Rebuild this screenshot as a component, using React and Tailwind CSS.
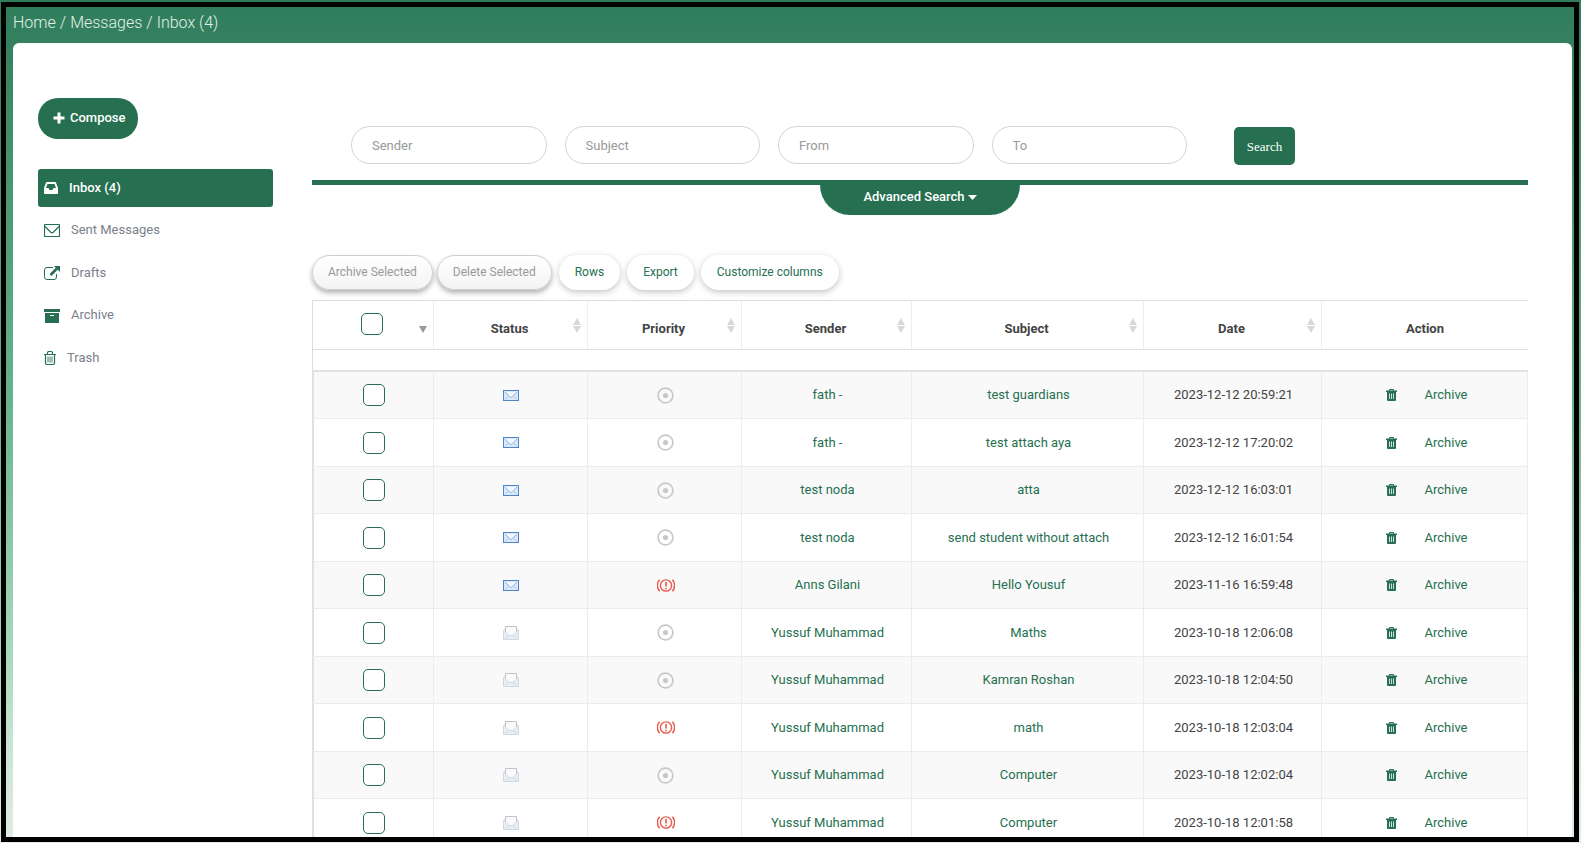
import React from "react";

const rows = [
  ["new", false, "fath -", "test guardians", "2023-12-12 20:59:21"],
  ["new", false, "fath -", "test attach aya", "2023-12-12 17:20:02"],
  ["new", false, "test noda", "atta", "2023-12-12 16:03:01"],
  ["new", false, "test noda", "send student without attach", "2023-12-12 16:01:54"],
  ["new", true, "Anns Gilani", "Hello Yousuf", "2023-11-16 16:59:48"],
  ["read", false, "Yussuf Muhammad", "Maths", "2023-10-18 12:06:08"],
  ["read", false, "Yussuf Muhammad", "Kamran Roshan", "2023-10-18 12:04:50"],
  ["read", true, "Yussuf Muhammad", "math", "2023-10-18 12:03:04"],
  ["read", false, "Yussuf Muhammad", "Computer", "2023-10-18 12:02:04"],
  ["read", true, "Yussuf Muhammad", "Computer", "2023-10-18 12:01:58"],
];

const PlusIcon = () => (
  <svg width="12" height="12" viewBox="0 0 12 12" fill="currentColor" aria-hidden="true">
    <path d="M4.5 0.5h3v4h4v3h-4v4h-3v-4h-4v-3h4z" />
  </svg>
);

const InboxIcon = () => (
  <svg width="14" height="12" viewBox="0 0 14 12" fill="currentColor" aria-hidden="true">
    <path
      fillRule="evenodd"
      d="M3 0h8a1 1 0 0 1 .9.6L14 6v5a1 1 0 0 1-1 1H1a1 1 0 0 1-1-1V6L2.100.6A1 1 0 0 1 3 0zM3.500 2L2 6h2.500l1 2h3l1-2H12l-1.500-4z"
    />
  </svg>
);

const MailIcon = () => (
  <svg width="16" height="13" viewBox="0 0 16 13" fill="none" stroke="currentColor" aria-hidden="true">
    <rect x="0.5" y="0.5" width="15" height="12" rx="0.5" strokeWidth="1.200" />
    <path d="M1 2.500l5.500 5.500a2.200 2.200 0 0 0 3 0L15 2.500" strokeWidth="1.200" />
  </svg>
);

const DraftIcon = () => (
  <svg width="16" height="14" viewBox="0 0 16 14" fill="none" stroke="currentColor" aria-hidden="true">
    <path d="M9 1.500H3A2.500 2.500 0 0 0 .5 4v7A2.500 2.500 0 0 0 3 13.500h7a2.500 2.500 0 0 0 2.500-2.500V8" />
    <path d="M6.500 9L13 2.500" strokeWidth="2.600" />
    <path d="M10 0h6v6z" fill="currentColor" stroke="none" />
  </svg>
);

const ArchiveIcon = () => (
  <svg width="16" height="14" viewBox="0 0 16 14" fill="currentColor" aria-hidden="true">
    <path d="M0 0h16v3H0z" />
    <path fillRule="evenodd" d="M1 4h14v10H1zM6 6v1h4V6z" />
  </svg>
);

const TrashIcon = () => (
  <svg width="12" height="14" viewBox="0 0 12 14" fill="none" stroke="currentColor" aria-hidden="true">
    <path d="M0 3.500h12M3.500 3V2a1.500 1.500 0 0 1 1.500-1.500h2A1.500 1.500 0 0 1 8.500 2v1M1.500 4v8a1.500 1.500 0 0 0 1.500 1.500h6a1.500 1.500 0 0 0 1.500-1.500V4" strokeWidth="1.200" />
    <path d="M4 5.500v6M6 5.500v6M8 5.500v6" strokeWidth="0.9" />
  </svg>
);

const TrashSolidIcon = () => (
  <svg width="11" height="12" viewBox="0 0 11 12" fill="currentColor" aria-hidden="true">
    <path fillRule="evenodd" d="M3 1.500V1a1 1 0 0 1 1-1h3a1 1 0 0 1 1 1v.5h3V3H0V1.500zM4 1v.5h3V1z" />
    <path fillRule="evenodd" d="M1 3h9v8a1 1 0 0 1-1 1H2a1 1 0 0 1-1-1zM3 4.500v5.500h.8V4.500zM5.100 4.500v5.500h.8V4.500zM7.200 4.500v5.500H8V4.500z" />
  </svg>
);

const NewMailIcon = () => (
  <svg width="16" height="11" viewBox="0 0 16 11" role="img" aria-label="Unread">
    <rect x="0.5" y="0.5" width="15" height="10" fill="#dbe9fb" stroke="#4f86c6" />
    <path d="M2 9.500L6 5.500M14 9.500L10 5.500" stroke="#a9c8f0" fill="none" />
    <path d="M2 2l6 6 6-6z" fill="#f4f8fe" />
    <path d="M2 2l4.500 4.700a2 2 0 0 0 3 0L14 2" stroke="#8db3e6" fill="none" />
  </svg>
);

const ReadMailIcon = () => (
  <svg width="16" height="14" viewBox="0 0 16 14" role="img" aria-label="Read">
    <path d="M0.500 4.500L2.500 3h11l2 1.500v9H.5z" fill="#e9eef6" stroke="#d0d8e4" />
    <path d="M2.500 6V.5h11V6L10 9.500H6z" fill="#fafafa" />
    <path d="M2.500 6V.5h11V6" fill="none" stroke="#bcc3cb" />
    <path d="M2.500 6L6 9.500h4L13.500 6M2 12.500l4-3M14 12.500l-4-3" fill="none" stroke="#d3dbe6" />
  </svg>
);

const NormalIcon = () => (
  <svg width="17" height="17" viewBox="0 0 17 17" role="img" aria-label="Normal">
    <circle cx="8.500" cy="8.500" r="7.400" fill="none" stroke="#c8c8c8" strokeWidth="1.700" />
    <circle cx="8.500" cy="8.500" r="2.600" fill="#c8c8c8" />
  </svg>
);

const UrgentIcon = () => (
  <svg width="18" height="13" viewBox="0 0 18 13" fill="none" stroke="#e8594b" strokeWidth="1.400" role="img" aria-label="Urgent">
    <circle cx="9" cy="6.500" r="5.600" />
    <path d="M9 3v4.500M9 8.700v1.500" strokeWidth="1.600" />
    <path d="M2.600.8a8.500 8.500 0 0 0 0 11.400M15.400.8a8.500 8.500 0 0 1 0 11.400" />
  </svg>
);

const SortIcon = () => (
  <svg width="8" height="15" viewBox="0 0 8 15" fill="#d8d8d8" aria-hidden="true">
    <path d="M4 0l4 7H0zM0 8h8l-4 7z" />
  </svg>
);

const Check = ({ label }) => (
  <input
    type="checkbox"
    aria-label={label}
    className="block size-[22px] appearance-none rounded-[5px] border border-[#267051] bg-white checked:bg-[#267051]"
  />
);

const folders = [
  ["Sent Messages", MailIcon],
  ["Drafts", DraftIcon],
  ["Archive", ArchiveIcon],
  ["Trash", TrashIcon],
];

const fields = ["Sender", "Subject", "From", "To"];
const columns = ["Status", "Priority", "Sender", "Subject", "Date", "Action"];
const tools = ["Rows", "Export", "Customize columns"];

export default function App() {
  return (
    <div className="h-screen overflow-hidden bg-linear-[180deg,#2f7d5b_0%,#35815f_5%,#4b9a70_24%,#6bb48b_48%,#a3d8b9_76%,#c9e4d2_88%,#e2ece4_100%] pt-[2px] pr-[2px] pb-px pl-px font-[Roboto,'Liberation_Sans',sans-serif] text-[13px] leading-5">
      <div className="flex h-full flex-col overflow-hidden border-5 border-black pr-[2px] pl-[7px]">
        <nav aria-label="Breadcrumb" className="flex h-9 shrink-0 items-center gap-1 pb-1 text-base font-light text-[#e4f1ea]">
          <a href="#home">Home</a>
          <span>/</span>
          <a href="#messages">Messages</a>
          <span>/</span>
          <a href="#inbox">Inbox (4)</a>
        </nav>

        <div className="flex min-h-0 flex-1 items-start rounded-t-[6px] bg-white pr-[44px] pl-[25px]">
          <aside className="w-[235px] shrink-0 pt-[55px]">
            <button className="flex h-[41px] items-center gap-[5px] rounded-[20px] bg-[#267051] pr-3 pb-[2px] pl-[15px] font-medium text-white">
              <PlusIcon />
              Compose
            </button>
            <a href="#inbox" className="mt-[30px] flex h-[38px] items-center gap-[11px] rounded-[3px] bg-[#267051] pl-[6px] font-medium text-white">
              <InboxIcon />
              Inbox (4)
            </a>
            <ul className="mt-[2px] grid h-[170px] grid-rows-4">
              {folders.map(([name, Icon]) => (
                <li key={name} className="flex items-center pl-[6px]">
                  <a href={"#" + name} className="flex items-center gap-[11px] text-[#7b808b]">
                    <span className="pt-px text-[#267051]">
                      <Icon />
                    </span>
                    {name}
                  </a>
                </li>
              ))}
            </ul>
          </aside>

          <main className="ml-[39px] min-w-0 flex-1">
            <form className="flex items-start pt-[83px] pr-[233px] pl-[39px]" onSubmit={(e) => e.preventDefault()}>
              <div className="mr-[47px] flex min-w-0 flex-1 gap-[18px]">
                {fields.map((f) => (
                  <input
                    key={f}
                    type="text"
                    aria-label={f}
                    placeholder={f}
                    className="h-[38px] min-w-0 flex-1 rounded-full border border-[#d4d4d4] bg-white px-5 text-[#555] placeholder:text-[#999]"
                  />
                ))}
              </div>
              <button className="mt-px h-[38px] w-[61px] rounded-[5px] bg-[#267051] pt-[2px] font-['Liberation_Serif',serif] text-white">Search</button>
            </form>
            <div className="mt-[15px] h-[5px] bg-[#267051]" />
            <button className="mx-auto flex h-[30px] w-[200px] items-center justify-center gap-[3px] rounded-b-[30px] bg-[#267051] pb-[6px] font-medium text-white">
              Advanced Search
              <svg width="9" height="5" viewBox="0 0 9 5" fill="currentColor" aria-hidden="true">
                <path d="M0 0h9L4.500 5z" />
              </svg>
            </button>

            <div className="mt-10 flex items-center text-xs">
              {["Archive Selected", "Delete Selected"].map((t) => (
                <button
                  key={t}
                  className="mr-1 h-[35px] rounded-full border border-[#cfcfcf] bg-linear-to-b from-white to-[#f4f4f4] px-[15px] pb-px text-[#999] shadow-[0_3px_5px_rgba(0,0,0,0.3)]"
                >
                  {t}
                </button>
              ))}
              <div className="ml-[3px] flex gap-[7px]">
                {tools.map((t) => (
                  <button key={t} className="h-[35px] rounded-full bg-white px-4 pb-px text-[#267051] shadow-[0_2px_6px_rgba(0,0,0,0.24)]">
                    {t}
                  </button>
                ))}
              </div>
            </div>

            <table className="mt-[10px] w-full table-fixed border-separate border-spacing-0 text-center">
              <colgroup>
                <col className="w-[122px]" />
                <col className="w-[154px]" />
                <col className="w-[154px]" />
                <col className="w-[170px]" />
                <col className="w-[232px]" />
                <col className="w-[178px]" />
                <col className="w-[206px]" />
              </colgroup>
              <thead>
                <tr className="h-[50px] text-[#444]">
                  <th className="border border-[#ddd] border-r-[#eee] p-0">
                    <div className="flex items-center justify-center pb-[2px] pl-[42px]">
                      <Check label="Select all messages" />
                      <svg width="8" height="7" viewBox="0 0 8 7" fill="#999" className="mt-[10px] ml-9" aria-hidden="true">
                        <path d="M0 0h8L4 7z" />
                      </svg>
                    </div>
                  </th>
                  {columns.map((c) => (
                    <th key={c} className="border-y border-r border-y-[#ddd] border-r-[#eee] p-0 pr-[2px] font-bold last:border-r-0 last:pr-0">
                      <div className="grid grid-cols-[1fr_auto_1fr] items-center">
                        <span className="col-start-2 pt-2">{c}</span>
                        {c !== "Action" && (
                          <span className="justify-self-end pr-1">
                            <SortIcon />
                          </span>
                        )}
                      </div>
                    </th>
                  ))}
                </tr>
                <tr className="h-[20px]">
                  <td colSpan={7} className="border-l border-[#ddd] p-0" />
                </tr>
              </thead>
              <tbody className="[&>tr:first-child>td]:border-t-2 [&>tr:first-child>td]:border-t-[#e3e3e3]">
                {rows.map(([status, urgent, sender, subject, date]) => (
                  <tr
                    key={date}
                    className="h-12 text-[#267051] odd:h-[47px] odd:bg-[#f9f9f9] first:!h-[49px] [&>td]:border-r [&>td]:border-b [&>td]:border-[#ececec] [&>td]:p-0 [&>td:nth-child(n+3)]:pl-[2px]"
                  >
                    <td className="border-l-2 !border-l-[#e0e0e0]">
                      <div className="flex justify-center">
                        <Check label={"Select " + subject} />
                      </div>
                    </td>
                    <td>
                      <div className="flex justify-center">{status === "new" ? <NewMailIcon /> : <ReadMailIcon />}</div>
                    </td>
                    <td>
                      <div className="flex justify-center">{urgent ? <UrgentIcon /> : <NormalIcon />}</div>
                    </td>
                    <td>{sender}</td>
                    <td>
                      <a href="#message">{subject}</a>
                    </td>
                    <td className="text-[#444]">{date}</td>
                    <td>
                      <div className="flex items-center justify-center gap-7 pl-[2px]">
                        <button aria-label="Delete message">
                          <TrashSolidIcon />
                        </button>
                        <a href="#archive">Archive</a>
                      </div>
                    </td>
                  </tr>
                ))}
              </tbody>
            </table>
          </main>
        </div>
      </div>
    </div>
  );
}
